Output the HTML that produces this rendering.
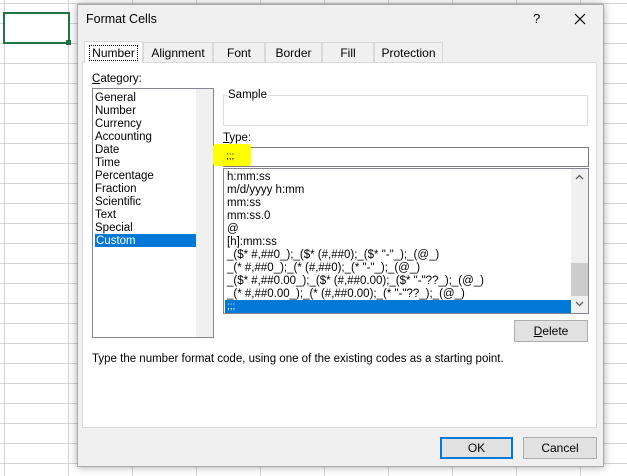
<!DOCTYPE html>
<html><head><style>
*{margin:0;padding:0;box-sizing:border-box}
body{width:627px;height:476px;overflow:hidden;background:#fff;font-family:"Liberation Sans",sans-serif;font-size:11.5px;color:#000;position:relative}
.a{position:absolute}
.grid{position:absolute;inset:0;background-image:linear-gradient(to right,#d4d4d4 1px,transparent 1px),linear-gradient(to bottom,#d4d4d4 1px,transparent 1px);background-size:64px 20px;background-position:4px 3px}
.dlg{left:77px;top:4px;width:527px;height:463px;background:#f0f0f0;border:1px solid #aaa;box-shadow:0 0 8px rgba(0,0,0,.35)}
.tab{position:absolute;top:42px;height:20px;border:1px solid #d9d9d9;border-bottom:none;background:#f0f0f0;text-align:center;line-height:21px;font-size:12px}
.row{position:absolute;left:0;height:13px;line-height:14px;white-space:nowrap}
.btn{position:absolute;background:#e1e1e1;border:1px solid #adadad;text-align:center;font-size:12px}
</style></head><body>
<div class="grid"></div>
<div class="a" style="left:3px;top:12px;width:67px;height:32px;border:2px solid #217346;background:#fff"></div>
<div class="a" style="left:66px;top:40px;width:5px;height:5px;background:#217346"></div>
<div class="a dlg"></div>
<div class="a" style="left:86px;top:12px;font-size:12.5px">Format Cells</div>
<div class="a" style="left:533px;top:11px;font-size:13px">?</div>
<svg class="a" style="left:574px;top:13px" width="12" height="12"><path d="M1 1L11 11M11 1L1 11" stroke="#000" stroke-width="1.2"/></svg>
<div class="a" style="left:82px;top:62px;width:515px;height:366px;background:#fff;border:1px solid #d9d9d9"></div>
<div class="tab" style="left:84px;width:59px;background:#fff;top:41px;height:22px;z-index:2;line-height:22px"><span style="border:1px dotted #000;padding:0 2px">Number</span></div>
<div class="tab" style="left:143px;width:70px">Alignment</div>
<div class="tab" style="left:213px;width:52px">Font</div>
<div class="tab" style="left:265px;width:57px">Border</div>
<div class="tab" style="left:322px;width:52px">Fill</div>
<div class="tab" style="left:374px;width:69px">Protection</div>
<div class="a" style="left:92px;top:73px"><u>C</u>ategory:</div>
<div class="a" style="left:92px;top:88px;width:122px;height:250px;border:1px solid #828790;background:#fff">
<div class="a" style="left:103px;top:0;width:17px;height:248px;background:#f0f0f0"></div>
<div class="a" style="left:2px;top:2px;width:101px">
<div class="row" style="top:0">General</div><div class="row" style="top:13px">Number</div><div class="row" style="top:26px">Currency</div><div class="row" style="top:39px">Accounting</div><div class="row" style="top:52px">Date</div><div class="row" style="top:65px">Time</div><div class="row" style="top:78px">Percentage</div><div class="row" style="top:91px">Fraction</div><div class="row" style="top:104px">Scientific</div><div class="row" style="top:117px">Text</div><div class="row" style="top:130px">Special</div><div class="row" style="top:143px;width:101px;background:#0078d7;color:#fff;padding-left:1px">Custom</div>
</div></div>
<div class="a" style="left:223px;top:95px;width:365px;height:31px;border:1px solid #dcdcdc"></div>
<div class="a" style="left:227px;top:89px;background:#fff;padding:0 1px">Sample</div>
<div class="a" style="left:223px;top:132px"><u>T</u>ype:</div>
<div class="a" style="left:223px;top:147px;width:366px;height:20px;border:1px solid #7a7a7a;background:#fff"></div>
<div class="a" style="left:213px;top:144px;width:38px;height:22px;background:#ffff00;border-radius:3px"></div>
<div class="a" style="left:226px;top:151px;font-size:10px">;;;</div>
<div class="a" style="left:223px;top:168px;width:366px;height:146px;border:1px solid #828790;background:#fff;overflow:hidden">
<div class="a" style="left:347px;top:0;width:17px;height:144px;background:#f0f0f0"></div>
<div class="a" style="left:347px;top:94px;width:17px;height:33px;background:#cdcdcd"></div>
<svg class="a" style="left:351px;top:5px" width="9" height="6"><path d="M1 5L4.5 1.5L8 5" stroke="#606060" fill="none" stroke-width="1.3"/></svg>
<svg class="a" style="left:351px;top:132px" width="9" height="6"><path d="M1 1L4.5 4.5L8 1" stroke="#606060" fill="none" stroke-width="1.3"/></svg>
<div class="a" style="left:3px;top:1px;width:343px">
<div class="row" style="top:0">h:mm:ss</div><div class="row" style="top:13px">m/d/yyyy h:mm</div><div class="row" style="top:26px">mm:ss</div><div class="row" style="top:39px">mm:ss.0</div><div class="row" style="top:52px">@</div><div class="row" style="top:65px">[h]:mm:ss</div><div class="row" style="top:78px">_($* #,##0_);_($* (#,##0);_($* "-"_);_(@_)</div><div class="row" style="top:91px">_(* #,##0_);_(* (#,##0);_(* "-"_);_(@_)</div><div class="row" style="top:104px">_($* #,##0.00_);_($* (#,##0.00);_($* "-"??_);_(@_)</div><div class="row" style="top:117px">_(* #,##0.00_);_(* (#,##0.00);_(* "-"??_);_(@_)</div>
<div class="row" style="top:130px;left:-2px;width:346px;background:#0078d7;color:#fff;padding-left:2px;font-size:10px">;;;</div>
</div></div>
<div class="btn" style="left:514px;top:320px;width:74px;height:22px;line-height:20px"><u>D</u>elete</div>
<div class="a" style="left:92px;top:353px">Type the number format code, using one of the existing codes as a starting point.</div>
<div class="btn" style="left:440px;top:437px;width:73px;height:22px;line-height:18px;border:2px solid #0078d7">OK</div>
<div class="btn" style="left:523px;top:437px;width:74px;height:22px;line-height:20px">Cancel</div>
</body></html>
